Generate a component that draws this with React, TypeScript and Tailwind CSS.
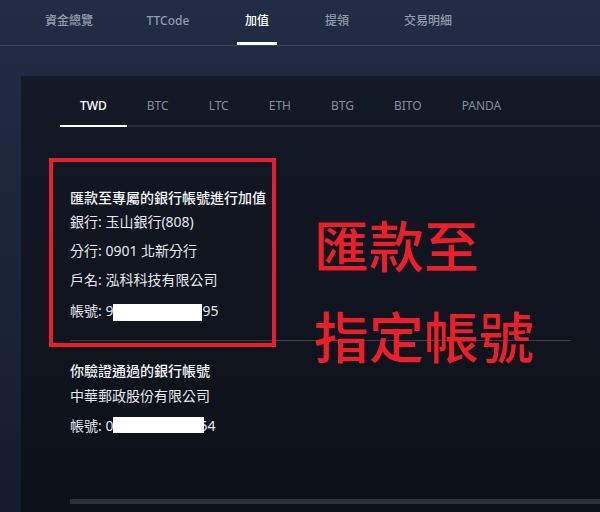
const navItems = [
  { label: "資金總覽", cls: "ml-[49px]" },
  { label: "TTCode", cls: "ml-[59px]" },
  { label: "加值", cls: "ml-[49px]" },
  { label: "提領", cls: "ml-[40px]" },
  { label: "交易明細", cls: "ml-[51px]" },
]
const coinTabs = ["TWD", "BTC", "LTC", "ETH", "BTG", "BITO", "PANDA"]

export default function App() {
  const activeNav = "加值"
  const activeCoin = "TWD"

  return (
    <div className="relative w-[600px] h-[512px] overflow-hidden bg-gradient-to-b from-[#212d45] to-[#151c2b] font-['Noto_Sans','Noto_Sans_CJK_TC',sans-serif]">
      {/* Top nav */}
      <div className="h-[46px] border-b border-[#39445a] flex items-stretch">
        {navItems.map((n) => (
          <div
            key={n.label}
            className={`${n.cls} w-[40px] flex items-center justify-center whitespace-nowrap text-[12px] font-medium border-b-[3px] ${
              n.label === activeNav ? "text-white border-white" : "text-[#949dad] border-transparent"
            }`}
          >
            {n.label}
          </div>
        ))}
      </div>

      {/* Panel */}
      <div className="mt-[30px] ml-[21px] w-[620px] h-[460px] bg-gradient-to-b from-[#131926] to-[#0c1017]">
        <div className="pt-[21px] ml-[39px] flex border-b-2 border-[#262b36]">
          {coinTabs.map((c) => (
            <div
              key={c}
              className={`px-5 pb-[10px] leading-[18px] text-[12px] -mb-[2px] border-b-2 ${
                c === activeCoin ? "text-white font-medium border-white" : "text-[#868d9a] border-transparent"
              }`}
            >
              {c}
            </div>
          ))}
        </div>

        <div className="pl-[49px] text-[14px] leading-[20px] text-[#e6e8ec]">
          <div className="mt-[61px] font-medium text-[#f4f5f7]">匯款至專屬的銀行帳號進行加值</div>
          <div className="mt-[4px]">銀行: 玉山銀行(808)</div>
          <div className="mt-[9px]">分行: 0901 北新分行</div>
          <div className="mt-[9px]">戶名: 泓科科技有限公司</div>
          <div className="mt-[11px] flex items-start">
            <span className="whitespace-pre">帳號: 9</span>
            <span className="mt-[3px] w-[89px] h-[17px] bg-white" />
            <span>95</span>
          </div>

          <div className="mt-[19px] w-[501px] h-px bg-[#3a3f4a]" />

          <div className="mt-[20px] font-medium text-[#f4f5f7]">你驗證通過的銀行帳號</div>
          <div className="mt-[5px]">中華郵政股份有限公司</div>
          <div className="mt-[10px] flex items-start">
            <span className="whitespace-pre">帳號: 0</span>
            <span className="relative z-10 mt-[1px] w-[91px] h-[16px] bg-white" />
            <span className="-ml-[5px]">54</span>
          </div>

          <div className="mt-[63px] h-[5px] bg-[#2b2f39]" />
        </div>
      </div>

      {/* Annotation overlay */}
      <div className="absolute left-[49px] top-[158px] w-[227px] h-[189px] border-4 border-[#e61f2a]" />
      <div className="absolute left-[314px] top-[198px] text-[55px] leading-[91px] font-medium text-[#ea1f29] font-['Noto_Sans_CJK_TC',sans-serif]">
        <div>匯款至</div>
        <div>指定帳號</div>
      </div>
    </div>
  )
}
